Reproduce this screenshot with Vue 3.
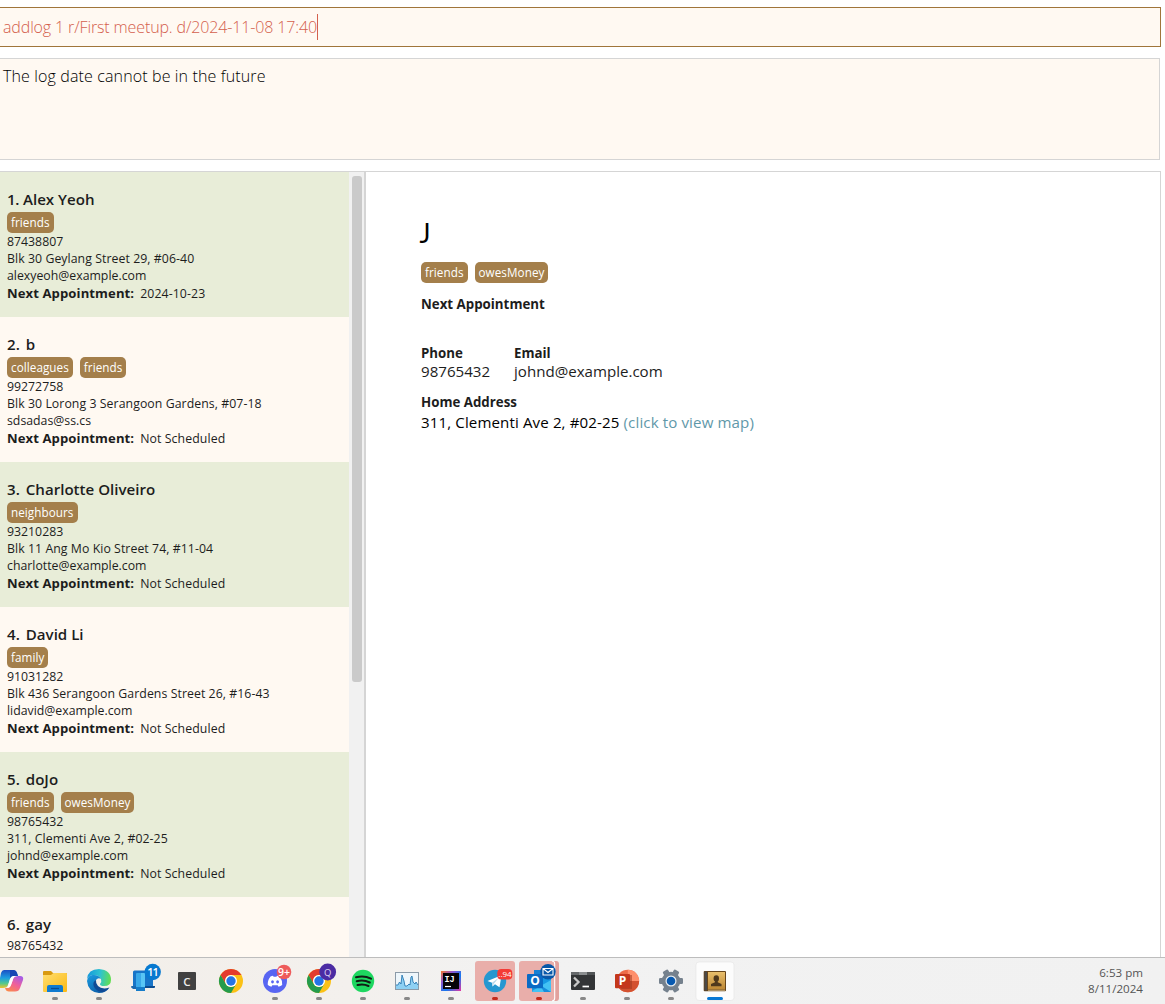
<script setup>
const people = [
  { n: 1, name: 'Alex Yeoh', tags: ['friends'], phone: '87438807', address: 'Blk 30 Geylang Street 29, #06-40', email: 'alexyeoh@example.com', next: '2024-10-23' },
  { n: 2, name: 'b', tags: ['colleagues', 'friends'], phone: '99272758', address: 'Blk 30 Lorong 3 Serangoon Gardens, #07-18', email: 'sdsadas@ss.cs', next: 'Not Scheduled' },
  { n: 3, name: 'Charlotte Oliveiro', tags: ['neighbours'], phone: '93210283', address: 'Blk 11 Ang Mo Kio Street 74, #11-04', email: 'charlotte@example.com', next: 'Not Scheduled' },
  { n: 4, name: 'David Li', tags: ['family'], phone: '91031282', address: 'Blk 436 Serangoon Gardens Street 26, #16-43', email: 'lidavid@example.com', next: 'Not Scheduled' },
  { n: 5, name: 'doJo', tags: ['friends', 'owesMoney'], phone: '98765432', address: '311, Clementi Ave 2, #02-25', email: 'johnd@example.com', next: 'Not Scheduled' },
  { n: 6, name: 'gay', tags: [], phone: '98765432', address: '', email: '', next: '' },
]
</script>

<template>
  <div class="screen">
    <div class="command"><span class="command-text">addlog 1 r/First meetup. d/2024-11-08 17:40</span><i class="caret"></i></div>
    <div class="result"><span>The log date cannot be in the future</span></div>

    <main class="main">
      <section class="list">
        <article v-for="p in people" :key="p.n" class="card">
          <h2><span>{{ p.n }}.</span><span>{{ p.name }}</span></h2>
          <div v-if="p.tags.length" class="tags"><span v-for="t in p.tags" :key="t" class="tag">{{ t }}</span></div>
          <p>{{ p.phone }}</p>
          <p class="street">{{ p.address }}</p>
          <p>{{ p.email }}</p>
          <p v-if="p.next" class="next"><b>Next Appointment:</b><span>{{ p.next }}</span></p>
        </article>
      </section>
      <div class="scroll"><div class="thumb"></div></div>
      <section class="detail">
        <h1>J</h1>
        <div class="tags"><span class="tag">friends</span><span class="tag">owesMoney</span></div>
        <h3 class="appt">Next Appointment</h3>
        <div class="contact">
          <div class="phone"><h3>Phone</h3><p>98765432</p></div>
          <div><h3>Email</h3><p>johnd@example.com</p></div>
        </div>
        <h3 class="home">Home Address</h3>
        <p class="address">311, Clementi Ave 2, #02-25 <a>(click to view map)</a></p>
      </section>
    </main>

    <footer class="taskbar">
      <div class="icons">
        <!-- Copilot -->
        <svg viewBox="0 0 44 46">
          <defs>
            <linearGradient id="cpa" x1="0" y1="0" x2="0" y2="1"><stop offset="0" stop-color="#1b4fc4" /><stop offset=".45" stop-color="#1d9fe0" /><stop offset=".75" stop-color="#57c98a" /><stop offset="1" stop-color="#f1c32b" /></linearGradient>
            <linearGradient id="cpb" x1=".8" y1="0" x2=".2" y2="1"><stop offset="0" stop-color="#a45ce8" /><stop offset=".5" stop-color="#f0609a" /><stop offset="1" stop-color="#fb8a4a" /></linearGradient>
          </defs>
          <path d="M15 12H24Q27 12 28 15L29 18H25Q22 18 21 21L19 27Q18 30 14 30H9L12 15Q13 12 15 12Z" fill="url(#cpa)" />
          <path d="M29 18H31Q35 18 34 22L31 30Q30 33.500 26 33.500H20Q17 33.500 16 30H18Q21 30 22 27L24.500 20Q25.500 18 29 18Z" fill="url(#cpb)" />
          <path d="M21 12H24Q27 12 28 15L29 18H25Q22 18 21 21Z" fill="#1746b4" />
          <path d="M25 18H28Q25.500 18 24.500 20L22 27Q21 30 18 30Q19 29 19.500 26L21 21Q22 18 25 18Z" fill="#fff" />
        </svg>
        <!-- File explorer -->
        <svg viewBox="0 0 44 46">
          <defs><linearGradient id="fo" x1="0" y1="0" x2="1" y2="1"><stop offset="0" stop-color="#ffde70" /><stop offset="1" stop-color="#fbb914" /></linearGradient></defs>
          <path d="M10 14Q10 13 11 13H18L20 15H33Q34 15 34 16V25H10Z" fill="#d99a10" />
          <path d="M10 17H18L20.500 15H33Q34 15 34 16V33Q34 34 33 34H11Q10 34 10 33Z" fill="url(#fo)" />
          <path d="M14 34V29Q14 27 16 27H28Q30 27 30 29V34Z" fill="#0f7bd0" /><path d="M18 30.500H26" stroke="#0a4c91" stroke-width="1.300" />
          <rect class="dot" x="19" y="39" width="6" height="3" rx="1.500" />
        </svg>
        <!-- Edge -->
        <svg viewBox="0 0 44 46">
          <defs>
            <linearGradient id="eg1" x1="0" y1=".3" x2="1" y2=".4"><stop offset="0" stop-color="#1598dc" /><stop offset=".55" stop-color="#2fc3cf" /><stop offset="1" stop-color="#62de52" /></linearGradient>
            <linearGradient id="eg2" x1="0" y1="0" x2=".7" y2="1"><stop offset="0" stop-color="#1b9de2" /><stop offset="1" stop-color="#0c59a4" /></linearGradient>
          </defs>
          <path d="M10 21Q11 11 22 11Q34 12 34 22Q34 28 27 28Q23 28 23 26Q25 24 24 21Q22 17 17 17Q12 17 10 21Z" fill="url(#eg1)" />
          <path d="M10 23Q11 16 17 17Q22 17 24 21Q21 19 19 22Q17 26 21 30Q25 33 32 30Q29 35 22 35Q11 34 10 23Z" fill="url(#eg2)" />
          <path d="M19 22Q15 24 17 29Q20 34 26 34Q30 33 32.500 29.500Q25 32 21 28Q18.500 25 19 22Z" fill="#104a95" />
          <rect class="dot" x="19" y="39" width="6" height="3" rx="1.500" />
        </svg>
        <!-- Phone link -->
        <svg viewBox="0 0 44 46">
          <path d="M12 14Q12 12.500 13.500 12.500H32V29H12Z" fill="#1875c8" /><path d="M10.500 28H34V29Q34 30 33 30H10.500Z" fill="#0b4c90" />
          <path d="M10.500 28H18V31H12Q10.500 30.500 10.500 28Z" fill="#1b69b0" />
          <rect x="15" y="15" width="9" height="18" rx="1" fill="#39a9e9" /><rect x="20" y="15" width="4" height="18" fill="#58c5f4" /><path d="M15 29H24V33H15Z" fill="#167cc9" />
          <circle cx="31.700" cy="14" r="8.200" fill="#0879d0" /><text x="31.500" y="18" font-size="11" font-weight="600" letter-spacing="-1" fill="#fff">11</text>
        </svg>
        <!-- C -->
        <svg viewBox="0 0 44 46"><rect x="13" y="14" width="18" height="18" rx="1" fill="#414141" /><text x="22" y="27.500" font-size="11.500" font-weight="600" fill="#eee">C</text></svg>
        <!-- Chrome -->
        <svg viewBox="0 0 44 46">
          <g id="chrome"><circle cx="22" cy="23" r="12" fill="#fbc116" /><path d="M11.600 17A12 12 0 0 1 32.400 17H22A6 6 0 0 0 16.800 26Z" fill="#e33b2e" /><path d="M11.600 17A12 12 0 0 0 22 35L27.200 26A6 6 0 0 1 16.800 26Z" fill="#249b4c" /><circle cx="22" cy="23" r="6" fill="#fff" /><circle cx="22" cy="23" r="4.700" fill="#2474e5" /></g>
        </svg>
        <!-- Discord -->
        <svg viewBox="0 0 44 46">
          <circle cx="22" cy="23" r="12" fill="#5865f2" />
          <path d="M17.500 18.500Q19 17.800 20 17.700L20.600 18.700H23.400L24 17.700Q25.500 17.900 26.800 18.500Q29.500 22.500 29.200 27Q27.500 28.400 25.600 28.700L24.700 27.200H19.300L18.400 28.700Q16.400 28.300 14.800 27Q14.400 22.500 17.500 18.500Z" fill="#fff" /><ellipse cx="19.500" cy="23.800" rx="1.400" ry="1.600" fill="#5865f2" /><ellipse cx="24.600" cy="23.800" rx="1.400" ry="1.600" fill="#5865f2" />
          <circle cx="31" cy="14" r="7.300" fill="#ee5b5b" /><text x="31" y="17.800" font-size="10.500" font-weight="600" fill="#fff">9+</text>
          <rect class="dot" x="19" y="39" width="6" height="3" rx="1.500" />
        </svg>
        <!-- Chrome, second profile -->
        <svg viewBox="0 0 44 46">
          <use href="#chrome" /><circle cx="30.700" cy="14" r="8.400" fill="#4b2ba3" /><text x="30.700" y="17.500" font-size="9.500" fill="#ded5f5">Q</text>
          <rect class="dot" x="19" y="39" width="6" height="3" rx="1.500" />
        </svg>
        <!-- Spotify -->
        <svg viewBox="0 0 44 46">
          <circle cx="22" cy="23" r="11.200" fill="#1ed760" />
          <path d="M15 19.300Q23 17 30 20.700M15.700 23.300Q22.500 21.300 28.800 24.500M16.500 27Q22.500 25.400 27.500 28" fill="none" stroke="#101c14" stroke-width="2" stroke-linecap="round" />
          <rect class="dot" x="19" y="39" width="6" height="3" rx="1.500" />
        </svg>
        <!-- Monitor chart -->
        <svg viewBox="0 0 44 46">
          <rect x="10.500" y="14.500" width="23" height="17" fill="#eef6fb" stroke="#8b9aa8" />
          <path d="M11 30V27L13 27L14.500 24L16 26L17 17L19 23L20 28L22 28L24 26L25 27L26 19L27 18L28 24L30 26L31 24L33 27V31H11Z" fill="#8ed0f3" />
          <path d="M11 27H13L14.500 24L16 26L17 17L19 23L20 28H22L24 26L25 27L26 19L27 18L28 24L30 26L31 24L33 27" fill="none" stroke="#2b7bb3" stroke-width=".9" />
          <rect class="dot" x="19" y="39" width="6" height="3" rx="1.500" />
        </svg>
        <!-- IntelliJ -->
        <svg viewBox="0 0 44 46">
          <defs><linearGradient id="ij" x1="0" y1="0" x2="1" y2="1"><stop offset="0" stop-color="#f97a28" /><stop offset=".3" stop-color="#8f55cf" /><stop offset=".6" stop-color="#147af0" /><stop offset="1" stop-color="#e833a0" /></linearGradient></defs>
          <rect x="12" y="13" width="20" height="20" fill="url(#ij)" /><rect x="14" y="15" width="16" height="16" fill="#060408" />
          <text x="20.500" y="23.500" font-size="8.500" font-weight="700" fill="#fff" class="mono">IJ</text><path d="M16 28.500H22" stroke="#fff" stroke-width="1.200" />
          <rect class="dot" x="19" y="39" width="6" height="3" rx="1.500" />
        </svg>
        <!-- Telegram -->
        <svg viewBox="0 0 44 46">
          <rect x="2" y="3" width="40" height="40" rx="3" fill="#e9aeaa" /><circle cx="22" cy="23" r="11.200" fill="#2697d0" />
          <path d="M14.500 23L28.500 17.200L26.500 29.200L22 26.200L19.500 28.500L19 24.700Z" fill="#fff" /><path d="M19 24.700L26 19.500L21 25.500L19.500 28.500Z" fill="#b9d8ea" />
          <rect x="24.300" y="11" width="15" height="10.500" rx="4" fill="#f43b36" /><text x="32" y="19.200" font-size="8" fill="#fff">..94</text>
          <rect x="19" y="39" width="6" height="3" rx="1.500" fill="#c42b1c" />
        </svg>
        <!-- Outlook -->
        <svg viewBox="0 0 44 46">
          <path d="M36 3H39Q42 3 42 6V40Q42 43 39 43H36Z" fill="#e2a19d" /><rect x="2" y="3" width="36" height="40" rx="3" fill="#e9aeaa" /><path d="M35 3Q37.700 3 37.700 6V40Q37.700 43 35 43" fill="none" stroke="#fff" stroke-width="1.100" />
          <rect x="17" y="12" width="15" height="14" fill="#1680d4" /><path d="M15 20H34V33Q34 34 33 34H16Q15 34 15 33Z" fill="#1699e4" /><path d="M15 33L34 22V34H16Z" fill="#43c2f4" /><path d="M23 27L34 34H27Z" fill="#168cdb" />
          <rect x="10" y="16" width="16" height="14.300" rx="1" fill="#0a6ac4" /><text x="18" y="27.300" font-size="12" font-weight="700" fill="#fff">O</text>
          <circle cx="31" cy="13.700" r="7.700" fill="#0857a8" /><path d="M26 10.500H36V17H26ZM26 10.500L31 14.500L36 10.500" fill="none" stroke="#fff" stroke-width="1.100" />
          <rect x="19" y="39" width="6" height="3" rx="1.500" fill="#c42b1c" />
        </svg>
        <!-- Terminal -->
        <svg viewBox="0 0 44 46">
          <rect x="10" y="14" width="24" height="18" rx="1" fill="#333537" /><path d="M11 14H18V17H10V15Q10 14 11 14Z" fill="#66696b" /><path d="M18 14H26V17H18Z" fill="#8a8d8f" /><path d="M26 14H33Q34 14 34 15V17H26Z" fill="#515456" />
          <path d="M13 19.500L17.500 24L13 28.500" fill="none" stroke="#c9c9c9" stroke-width="2.300" /><path d="M21.500 28.500H28" stroke="#fff" stroke-width="1.700" />
          <rect class="dot" x="19" y="39" width="6" height="3" rx="1.500" />
        </svg>
        <!-- PowerPoint -->
        <svg viewBox="0 0 44 46">
          <circle cx="22.800" cy="23" r="11.300" fill="#ed6c47" /><path d="M22.800 11.700A11.300 11.300 0 0 1 34.100 23H22.800Z" fill="#ff8f6b" /><path d="M11.500 23H34.100A11.300 11.300 0 0 1 11.500 23Z" fill="#d35230" />
          <path d="M22 17H27V31H16" fill="#9f3a20" opacity=".55" /><rect x="10" y="16" width="15" height="14.300" rx="1" fill="#c4371c" /><text x="17.500" y="27.300" font-size="12" font-weight="700" fill="#fff">P</text>
          <rect class="dot" x="19" y="39" width="6" height="3" rx="1.500" />
        </svg>
        <!-- Settings -->
        <svg viewBox="0 0 44 46">
          <g fill="#75818d"><circle cx="22" cy="23" r="9.300" /><rect v-for="a in [0, 60, 120]" :key="a" x="19" y="11" width="6" height="24" rx="1.300" :transform="`rotate(${a + 30} 22 23)`" /></g>
          <circle cx="22" cy="23" r="5.500" fill="#e8edf1" /><circle cx="22" cy="23" r="4.300" fill="#0759b0" />
          <rect class="dot" x="19" y="39" width="6" height="3" rx="1.500" />
        </svg>
        <!-- Address book -->
        <svg viewBox="0 0 44 46">
          <rect x="3" y="4" width="38" height="38.500" rx="3" fill="#fcfcfc" stroke="#e6e6e6" stroke-width=".7" />
          <defs><linearGradient id="ab" x1="0" y1="0" x2="0" y2="1"><stop offset="0" stop-color="#e9bf6c" /><stop offset="1" stop-color="#bd8734" /></linearGradient></defs>
          <rect x="10.700" y="13" width="22.300" height="20.300" rx="1" fill="#66451b" /><rect x="11.500" y="13.500" width="2.500" height="19" fill="#4a4948" /><rect x="15" y="14" width="17" height="17.500" fill="url(#ab)" />
          <path d="M15 32.300H32" stroke="#e6d0a0" stroke-width=".7" /><ellipse cx="23.300" cy="20.500" rx="2.700" ry="3.200" fill="#50391d" /><path d="M22 22H24.700V24.300L28.500 26V28.300H18V26L22 24.300Z" fill="#50391d" />
          <rect x="14" y="39" width="16" height="3" rx="1.500" fill="#0878d4" />
        </svg>
      </div>
      <div class="clock"><span>6:53 pm</span><span>8/11/2024</span></div>
    </footer>
  </div>
</template>

<style>
body { margin: 0; overflow: hidden; }
</style>

<style scoped>
* { box-sizing: border-box; }
.screen { width: 1165px; height: 1004px; padding-top: 7px; display: flex; flex-direction: column; overflow: hidden; background: #fff; font-family: "Open Sans", "Noto Sans", sans-serif; color: #1d1d1d; }
h1, h2, h3, p { margin: 0; white-space: nowrap; }
.command { width: 1161px; height: 40px; flex: none; padding-left: 3px; display: flex; align-items: center; border: 1px solid #a0753a; border-left: 0; background: #fff9f2; color: #d4604d; font-size: 16px; font-weight: 300; letter-spacing: -.13px; white-space: nowrap; }
.caret { width: 1px; height: 26px; background: #d4604d; }
.result { width: 1160px; height: 102px; flex: none; margin-top: 11px; padding: 6px 0 0 3px; border: 1px solid #d5d5d5; border-left: 0; background: #fff9f2; color: #000; font-size: 16px; line-height: 23px; font-weight: 300; letter-spacing: .13px; }
.main { width: 1161px; height: 786px; flex: none; margin-top: 11px; display: flex; border: 1px solid #d5d5d5; border-width: 1px 1px 0 0; overflow: hidden; }
.list { width: 349px; flex: none; overflow: hidden; }
.card { height: 145px; padding: 15px 0 0 7px; background: #e8edd8; font-size: 12.300px; line-height: 17px; }
.card:nth-child(even) { background: #fff9f2; }
.card h2 { height: 25px; display: flex; gap: 6px; font-size: 15.100px; line-height: 25px; font-weight: 600; }
.card:first-child h2 { gap: 4px; }
.card:first-child h2 span:first-child { letter-spacing: -.4px; }
.card p { height: 17px; }
.card .street { letter-spacing: .06px; }
.card .next { height: 18px; display: flex; gap: 6px; line-height: 19px; letter-spacing: .09px; }
.next b { font-size: 13.100px; }
.tags { height: 21px; display: flex; gap: 7px; }
.tag { height: 21px; padding: 0 4px; border-radius: 5px; background: #a47f4b; color: #fff; font-size: 11.700px; line-height: 21px; font-weight: 500; letter-spacing: .06px; white-space: nowrap; }
.scroll { width: 15px; flex: none; padding: 4px 2px 0 3px; background: #f1f1f1; }
.thumb { height: 506px; width: 10px; border-radius: 3px; background: #cacaca; }
.detail { flex: 1; border-left: 2px solid #d5d5d5; padding: 40px 0 0 55px; background: #fff; }
h1 { height: 50px; margin-left: -1.500px; font: 400 26px/43px Lato, sans-serif; color: #000; }
h3 { height: 18px; font-size: 13.300px; line-height: 18px; font-weight: 700; }
.detail .appt { margin-top: 12px; }
.contact { display: flex; margin-top: 31px; font-size: 15.100px; line-height: 19px; }
.phone { width: 93px; }
.home { margin-top: 12px; }
.address { color: #000; font-size: 15.100px; line-height: 22px; letter-spacing: .115px; }
.address a { color: #5f98a9; }
.taskbar { height: 47px; flex: none; display: flex; justify-content: space-between; border-top: 1px solid #bdbdbd; background: linear-gradient(90deg, #f2eee8 0, #f3f0ed 30%, #f2f2f2 45%, #f1f1f1); }
.icons { display: flex; margin-left: -11px; }
.icons svg { width: 44px; height: 46px; flex: none; }
.icons text { text-anchor: middle; font-family: "Open Sans", sans-serif; }
.icons .mono { font-family: "Liberation Mono", monospace; }
.dot { fill: #888; }
.clock { display: flex; flex-direction: column; align-items: flex-end; padding: 7px 22px 0 0; font-size: 11.600px; line-height: 16px; color: #555; }
</style>
